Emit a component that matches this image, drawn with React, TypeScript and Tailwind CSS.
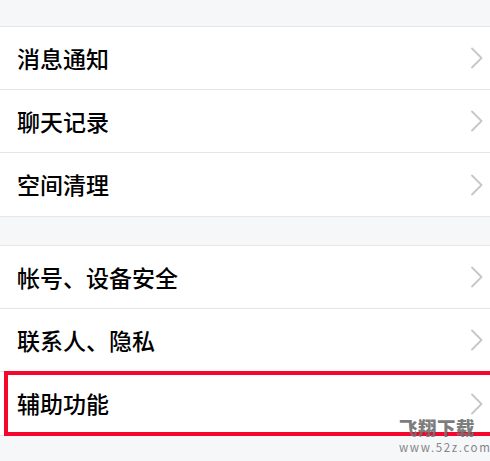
const groups = [
  ['消息通知', '聊天记录', '空间清理'],
  ['帐号、设备安全', '联系人、隐私', '辅助功能'],
];

function Chevron() {
  return (
    <svg width="14" height="22" viewBox="0 0 14 22" fill="none" className="text-[#c6c6c9]">
      <path d="M2 1.5 L11.5 11 L2 20.5" stroke="currentColor" strokeWidth="1.8" strokeLinecap="round" strokeLinejoin="round" />
    </svg>
  );
}

function Row({ label, last, highlight }: { label: string; last: boolean; highlight?: boolean }) {
  return (
    <div
      className={`relative flex h-[63px] items-center justify-between bg-white pl-[17px] pr-[6px] ${
        last ? '' : 'border-b border-[#e6e6e6]'
      }`}
    >
      <span className="text-[23px] font-medium leading-none text-black">{label}</span>
      <Chevron />
      {highlight && (
        <div className="pointer-events-none absolute left-[4px] right-[-8px] top-[-1px] bottom-[-1px] border-4 border-[#f5062c]" />
      )}
    </div>
  );
}

export default function App() {
  return (
    <div
      className="relative h-[461px] w-[490px] overflow-hidden bg-[#f6f7f9]"
      style={{ fontFamily: '"Noto Sans CJK SC", "Noto Sans", sans-serif' }}
    >
      <div className="h-[26px]" />
      {groups.map((items, gi) => (
        <div key={gi} className={`border-y border-[#e6e6e6] ${gi === 1 ? 'mt-[28px]' : ''}`}>
          {items.map((label, i) => (
            <Row
              key={label}
              label={label}
              last={i === items.length - 1}
              highlight={label === '辅助功能'}
            />
          ))}
        </div>
      ))}

      {/* watermark */}
      <div className="pointer-events-none absolute left-[399px] top-[418px] flex w-[78px] flex-col whitespace-nowrap text-[#6f6f6f] opacity-90">
        <span className="text-[18.5px] font-black leading-none tracking-[0.5px]">飞翔下载</span>
        <span className="mt-[5px] text-[11.5px] leading-none tracking-[1.6px] text-[#7a7a7a]">www.52z.com</span>
      </div>
    </div>
  );
}
